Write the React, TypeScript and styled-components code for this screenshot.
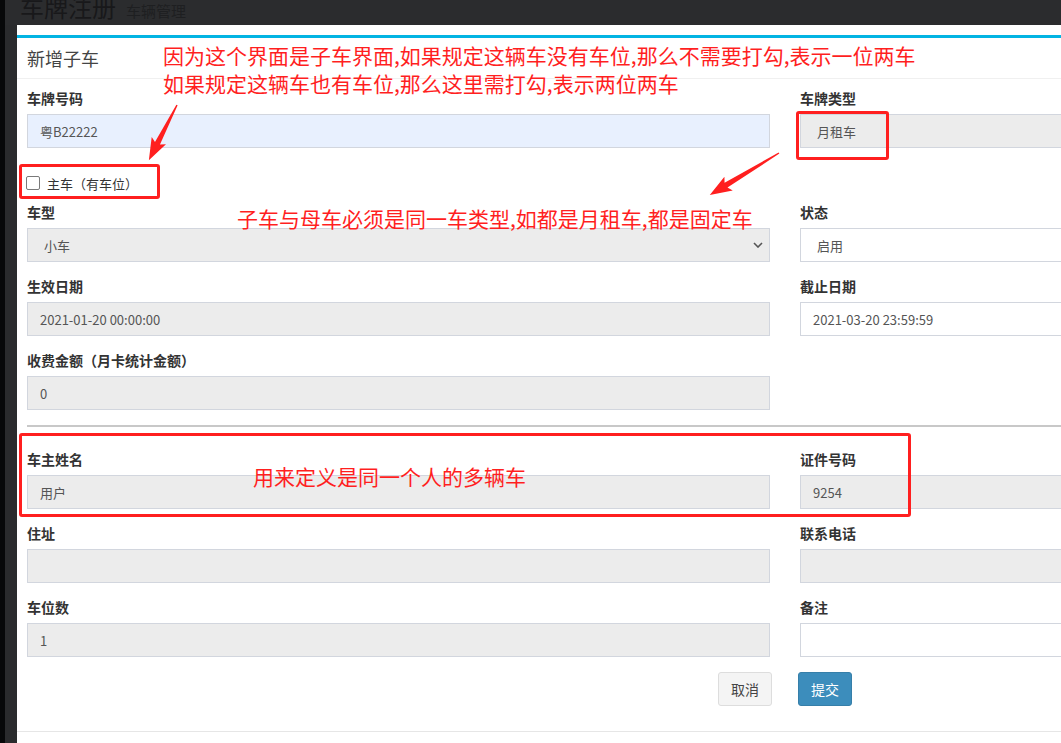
import React, { FC } from "react";
import styled, { createGlobalStyle } from "styled-components";

const GlobalStyle = createGlobalStyle`
  html, body {
    margin: 0;
    padding: 0;
    overflow: hidden;
    background: #2b2c2e;
  }
  * {
    box-sizing: border-box;
  }
`;

type Tone = "autofill" | "disabled" | "plain";

const toneBg: Record<Tone, string> = {
  autofill: "#e8f0fe",
  disabled: "#ececec",
  plain: "#ffffff",
};

interface FieldProps {
  label: string;
  value?: string;
  tone?: Tone;
  select?: boolean;
  arrow?: boolean;
}

const Field: FC<FieldProps> = ({ label, value = "", tone = "disabled", select, arrow }) => (
  <Group>
    <Label>{label}</Label>
    {select ? (
      <SelectBox $tone={tone}>
        <span>{value}</span>
        {arrow && (
          <svg width="10" height="6" viewBox="0 0 10 6">
            <path d="M1 1l4 4 4-4" fill="none" stroke="#555" strokeWidth="1.6" />
          </svg>
        )}
      </SelectBox>
    ) : (
      <Input readOnly value={value} $tone={tone} />
    )}
  </Group>
);

const Arrow: FC<{ x: number; y: number; angle: number; length: number }> = ({
  x,
  y,
  angle,
  length: l,
}) => (
  <polygon
    transform={`translate(${x} ${y}) rotate(${angle})`}
    points={`0,-0.7 ${l - 19},-2.8 ${l - 22},-8 ${l},0 ${l - 22},8 ${l - 19},2.8 0,0.7`}
    fill="#ff1f1f"
  />
);

const App: FC = () => {
  return (
    <Page>
      <GlobalStyle />
      <TopBar>
        <PageTitle>车牌注册</PageTitle>
        <PageSub>车辆管理</PageSub>
      </TopBar>
      <Main>
        <Rail />
        <Sheet>
          <Modal>
            <ModalHeader>
              <ModalTitle>新增子车</ModalTitle>
            </ModalHeader>
            <ModalBody>
              <FormGrid>
                <Field label="车牌号码" value="粤B22222" tone="autofill" />
                <Field label="车牌类型" value="月租车" select />
                <CheckRow>
                  <CheckBox />
                  <CheckText>主车（有车位）</CheckText>
                </CheckRow>
                <div />
                <Field label="车型" value="小车" select arrow />
                <Field label="状态" value="启用" tone="plain" select />
                <Field label="生效日期" value="2021-01-20 00:00:00" />
                <Field label="截止日期" value="2021-03-20 23:59:59" tone="plain" />
                <Field label="收费金额（月卡统计金额）" value="0" />
                <div />
              </FormGrid>
              <Rule />
              <FormGrid>
                <Field label="车主姓名" value="用户" />
                <Field label="证件号码" value="9254" />
                <Field label="住址" />
                <Field label="联系电话" />
                <Field label="车位数" value="1" />
                <Field label="备注" tone="plain" />
              </FormGrid>
              <Actions>
                <Button>取消</Button>
                <Button $primary>提交</Button>
              </Actions>
            </ModalBody>
            <ModalFooter />
          </Modal>
        </Sheet>
      </Main>

      <Overlay>
        <Note style={{ left: 163, top: 41 }}>
          因为这个界面是子车界面,如果规定这辆车没有车位,那么不需要打勾,表示一位两车
          <br />
          如果规定这辆车也有车位,那么这里需打勾,表示两位两车
        </Note>
        <Note style={{ left: 237, top: 204 }}>子车与母车必须是同一车类型,如都是月租车,都是固定车</Note>
        <Note style={{ left: 253, top: 462 }}>用来定义是同一个人的多辆车</Note>

        <RedBox style={{ left: 19, top: 164, width: 141, height: 35 }} />
        <RedBox style={{ left: 796, top: 111, width: 93, height: 49 }} />
        <RedBox style={{ left: 19, top: 433, width: 892, height: 84 }} />

        <Marks width="1061" height="743" viewBox="0 0 1061 743">
          <Arrow x={177} y={105} angle={117} length={62} />
          <Arrow x={779} y={153} angle={148.7} length={81} />
        </Marks>
      </Overlay>
    </Page>
  );
};

export default App;

const Page = styled.div`
  position: relative;
  width: 100vw;
  height: 100vh;
  overflow: hidden;
  display: flex;
  flex-direction: column;
  background: #2b2c2e;
  border-left: 5px solid #070809;
  font-family: "Noto Sans CJK SC", "Liberation Sans", sans-serif;
`;

const TopBar = styled.div`
  height: 25px;
  flex-shrink: 0;
  display: flex;
  align-items: baseline;
  gap: 10px;
  padding-left: 15px;
  overflow: hidden;
`;

const PageTitle = styled.h1`
  margin: -5px 0 0;
  font-size: 24px;
  line-height: 24px;
  font-weight: 400;
  color: #18181a;
`;

const PageSub = styled.span`
  font-size: 15px;
  color: #1e1f21;
`;

const Main = styled.div`
  flex: 1;
  display: flex;
  min-height: 0;
`;

const Rail = styled.div`
  width: 12px;
  flex-shrink: 0;
  background: #2a2b2d;
`;

const Sheet = styled.div`
  flex: 1;
  min-width: 0;
  background: #fff;
  padding-top: 10px;
  overflow: hidden;
`;

const Modal = styled.div`
  width: 1536px;
  border-top: 3px solid #02b4e3;
  background: #fff;
`;

const ModalHeader = styled.div`
  height: 41px;
  display: flex;
  align-items: center;
  padding: 0 10px;
  border-bottom: 1px solid #f0f0f0;
`;

const ModalTitle = styled.h4`
  margin: 0;
  font-size: 18px;
  font-weight: 400;
  color: #444;
`;

const ModalBody = styled.div`
  padding: 10px 10px 25px;
`;

const ModalFooter = styled.div`
  height: 20px;
  border-top: 1px solid #e6e6e6;
`;

const FormGrid = styled.div`
  display: grid;
  grid-template-columns: 1fr 1fr;
  column-gap: 30px;
`;

const Group = styled.div`
  margin-bottom: 15px;
`;

const Label = styled.label`
  display: block;
  margin-bottom: 6px;
  font-size: 14px;
  line-height: 19px;
  font-weight: 700;
  color: #333;
`;

const Input = styled.input<{ $tone: Tone }>`
  display: block;
  width: 100%;
  height: 34px;
  padding: 6px 12px;
  border: 1px solid #d2d6de;
  border-radius: 0;
  outline: none;
  background: ${(p) => toneBg[p.$tone]};
  font-family: inherit;
  font-size: 13px;
  color: #555;
`;

const SelectBox = styled.div<{ $tone: Tone }>`
  height: 34px;
  display: flex;
  align-items: center;
  justify-content: space-between;
  padding: 0 6px 0 16px;
  border: 1px solid #d2d6de;
  background: ${(p) => toneBg[p.$tone]};
  font-size: 13px;
  color: #555;
`;

const CheckRow = styled.div`
  display: flex;
  align-items: center;
  height: 20px;
  margin: 10px 0;
`;

const CheckBox = styled.span`
  width: 14px;
  height: 14px;
  margin-left: -1px;
  border: 1px solid #7a7a7a;
  border-radius: 2px;
  background: #fff;
`;

const CheckText = styled.span`
  margin-left: 7px;
  font-size: 13px;
  color: #333;
`;

const Rule = styled.hr`
  margin: 0 0 23px;
  height: 2px;
  border: 0;
  background: #c8c8c8;
`;

const Actions = styled.div`
  display: flex;
  justify-content: center;
  gap: 26px;
`;

const Button = styled.button<{ $primary?: boolean }>`
  height: 34px;
  padding: 0 12px;
  border-radius: 3px;
  border: 1px solid ${(p) => (p.$primary ? "#367fa9" : "#ddd")};
  background: ${(p) => (p.$primary ? "#3c8dbc" : "#f4f4f4")};
  color: ${(p) => (p.$primary ? "#fff" : "#444")};
  font-family: inherit;
  font-size: 14px;
`;

/* annotation layer, placed against the window's top-left corner (not the page's padding box) */
const Overlay = styled.div`
  position: absolute;
  left: -5px;
  top: 0;
  width: 1061px;
  height: 743px;
  pointer-events: none;
`;

const Note = styled.div`
  position: absolute;
  font-size: 21px;
  line-height: 28px;
  color: #ff1f1f;
  white-space: nowrap;
`;

const RedBox = styled.div`
  position: absolute;
  border: 3px solid #ff1f1f;
  border-radius: 3px;
`;

const Marks = styled.svg`
  position: absolute;
  left: 0;
  top: 0;
`;
